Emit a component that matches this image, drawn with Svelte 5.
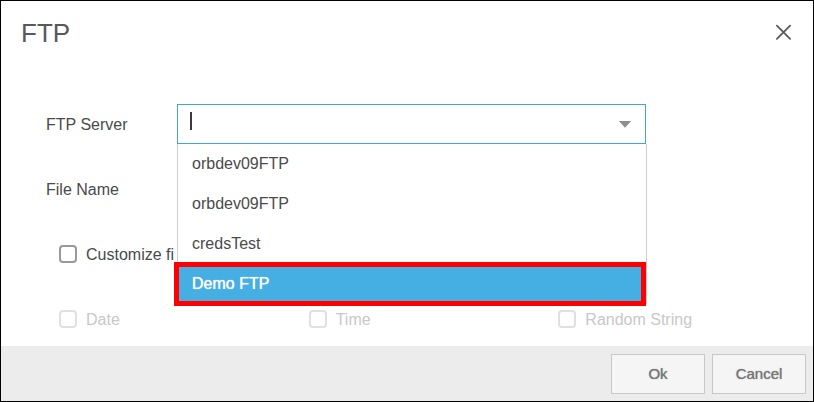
<script>
  const servers = [
    { id: 1, name: 'orbdev09FTP' },
    { id: 2, name: 'orbdev09FTP' },
    { id: 3, name: 'credsTest' },
    { id: 4, name: 'Demo FTP' }
  ];
  const parts = ['Date', 'Time', 'Random String'];

  let active = $state(4);
  let query = $state('');
  let fileName = $state('');
  let customize = $state(false);
</script>

<div class="dialog" role="dialog" aria-labelledby="dialog-title">
  <header>
    <h1 id="dialog-title">FTP</h1>
    <button class="close" type="button" aria-label="Close">
      <svg width="17" height="17" viewBox="0 0 17 17" aria-hidden="true">
        <path d="M1.9 1.7 15.1 14.9M15.1 1.7 1.9 14.9" fill="none" stroke="#58595b" stroke-width="1.8" stroke-linecap="round" />
      </svg>
    </button>
  </header>

  <main>
    <div class="row field">
      <label for="server">FTP Server</label>
      <div class="combo">
        <input id="server" type="text" role="combobox" aria-expanded="true" aria-controls="server-list" autocomplete="off" bind:value={query} />
        {#if !query}<span class="caret"></span>{/if}
        <svg class="arrow" width="14" height="8" viewBox="0 0 14 8" aria-hidden="true">
          <path d="M.8 1H13.2L7 7.8Z" fill="#8e8e8e" />
        </svg>
        <ul id="server-list" role="listbox">
          {#each servers as server (server.id)}
            <li role="option" aria-selected={server.id === active} class:active={server.id === active} onmouseenter={() => (active = server.id)}>
              {server.name}
            </li>
          {/each}
        </ul>
      </div>
    </div>

    <div class="row field">
      <label for="file">File Name</label>
      <input id="file" type="text" bind:value={fileName} />
    </div>

    <div class="row checks">
      <label class="check"><input type="checkbox" bind:checked={customize} /><span>Customize fi</span></label>
    </div>

    <div class="row checks">
      {#each parts as part}
        <label class="check disabled"><input type="checkbox" disabled /><span>{part}</span></label>
      {/each}
    </div>
  </main>

  <footer>
    <button type="button">Ok</button>
    <button type="button">Cancel</button>
  </footer>
</div>

<style>
  .dialog {
    box-sizing: border-box;
    border: 1px solid #000;
    background: #fff;
    color: #4a4a4a;
    font: 16px/20px "Liberation Sans", Arial, sans-serif;
  }

  header {
    display: flex;
    align-items: center;
    justify-content: space-between;
    height: 63px;
    padding: 0 21px 0 20px;
  }

  h1 {
    margin: 0;
    font-size: 26px;
    line-height: 32px;
    font-weight: 400;
    color: #58595b;
  }

  .close {
    display: flex;
    padding: 0;
    border: 0;
    background: none;
  }

  main {
    display: flex;
    flex-direction: column;
    gap: 25px;
    padding: 40px 0 7px;
  }

  .row {
    min-height: 40px;
    align-items: center;
  }

  .field {
    display: flex;
    padding: 0 167px 0 45px;
  }

  .field > label {
    flex: 0 0 131px;
    padding-top: 2px;
  }

  .combo {
    position: relative;
    display: flex;
    flex: 1;
  }

  input[type='text'] {
    box-sizing: border-box;
    flex: 1;
    min-width: 0;
    height: 40px;
    padding: 0 14px;
    border: 1px solid #ccc;
    border-radius: 0;
    background: #fff;
    color: inherit;
    font: inherit;
  }

  .combo input[type='text'] {
    border-color: #3fa9dc;
    outline: none;
  }

  .caret {
    position: absolute;
    left: 13px;
    top: 8px;
    width: 2px;
    height: 18px;
    background: #3c3c3c;
  }

  .arrow {
    position: absolute;
    right: 14px;
    top: 16px;
  }

  ul {
    position: absolute;
    z-index: 1;
    top: 100%;
    left: 0;
    right: -1px;
    margin: 0;
    padding: 0;
    border: solid #ccc;
    border-width: 0 1px;
    background: #fff;
    list-style: none;
  }

  li {
    position: relative;
    height: 40px;
    padding-left: 14px;
    line-height: 39px;
  }

  li.active {
    background: #45aee3;
    color: #fff;
    text-shadow: 0 0 1px #fff;
  }

  li.active::after {
    content: '';
    position: absolute;
    inset: -2px 0 -2px -4px;
    border: 5px solid #f00;
  }

  .checks {
    display: grid;
    grid-template-columns: repeat(3, 1fr);
    padding: 0 5px 0 58px;
  }

  .check {
    display: flex;
    align-items: center;
    gap: 9px;
    white-space: nowrap;
  }

  .check span {
    padding-top: 2px;
  }

  .check input {
    appearance: none;
    box-sizing: border-box;
    width: 18px;
    height: 18px;
    margin: 0;
    border: 2px solid #999;
    border-radius: 4px;
    background: #fff;
  }

  .check input:checked {
    background: #45aee3;
  }

  .disabled {
    color: #c8c8c8;
  }

  .disabled input {
    border-color: #e0e0e0;
  }

  footer {
    display: flex;
    justify-content: flex-end;
    gap: 7px;
    padding: 8px 7px 7px;
    background: #ececec;
  }

  footer button {
    width: 94px;
    height: 40px;
    padding: 0;
    border: 1px solid #c8c8c8;
    background: #f5f5f5;
    color: #777;
    font: 15px/20px "Liberation Sans", Arial, sans-serif;
    text-shadow: 0 0 1px #777;
  }
</style>
